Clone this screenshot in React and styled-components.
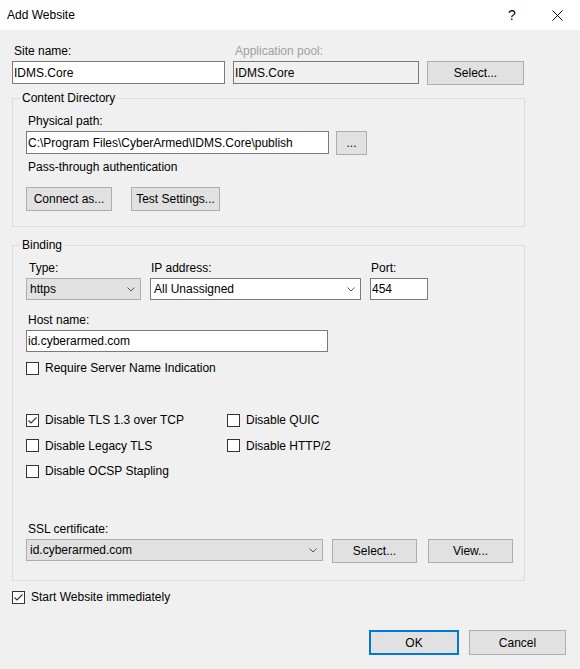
import React from 'react';
import styled, { createGlobalStyle } from 'styled-components';

const GlobalStyle = createGlobalStyle`
  html, body {
    margin: 0;
    padding: 0;
    background: #f0f0f0;
  }
  body {
    font-family: "Liberation Sans", Arial, sans-serif;
    font-size: 12px;
    color: #000;
  }
  *, *::before, *::after { box-sizing: border-box; }
`;

const Window = styled.div`
  width: 580px;
  height: 669px;
  background: #f0f0f0;
  display: flex;
  flex-direction: column;
  overflow: hidden;
`;

const TitleBar = styled.div`
  height: 30px;
  background: #fff;
  display: flex;
  align-items: center;
  flex-shrink: 0;
`;

const Title = styled.div`
  flex: 1;
  padding-left: 7px;
  line-height: 16px;
  margin-top: -1px;
`;

const CaptionButton = styled.div`
  width: ${p => p.$w}px;
  height: 30px;
  display: flex;
  align-items: center;
  justify-content: center;
  font-size: 14px;
  color: #000;
`;

const Body = styled.div`
  padding: 13px 0 0 12px;
  display: flex;
  flex-direction: column;
`;

const TopRow = styled.div`
  display: grid;
  grid-template-columns: 213px 186px 97px;
  column-gap: 8px;
  align-items: start;
`;

const Field = styled.div`
  display: flex;
  flex-direction: column;
  margin-top: ${p => p.$mt || 0}px;
  width: ${p => (p.$w ? `${p.$w}px` : 'auto')};
`;

const Label = styled.label`
  line-height: 16px;
  padding-left: ${p => (p.$pl ?? 2)}px;
  margin-bottom: 2px;
  white-space: nowrap;
  color: ${p => (p.$disabled ? '#a0a0a0' : '#000')};
`;

const TextBox = styled.input`
  display: block;
  width: ${p => (p.$w ? `${p.$w}px` : '100%')};
  height: ${p => p.$h || 23}px;
  margin: 0;
  padding: 0 1px;
  border: 1px solid #7a7a7a;
  border-radius: 0;
  background: ${p => (p.$muted ? '#f0f0f0' : '#fff')};
  font: inherit;
  color: #000;
  outline: none;
`;

const Button = styled.button`
  width: ${p => p.$w}px;
  height: ${p => p.$h || 24}px;
  margin: ${p => p.$mt || 0}px 0 0 ${p => p.$ml || 0}px;
  padding: 0;
  border: ${p => (p.$default ? '2px solid #0078d7' : '1px solid #adadad')};
  border-radius: 0;
  background: #e1e1e1;
  font: inherit;
  color: #000;
  flex-shrink: 0;
`;

const Group = styled.fieldset`
  width: 513px;
  margin: ${p => p.$mt}px 0 0 0;
  padding: 0;
  min-width: 0;
  border: 1px solid #dcdcdc;
`;

const Legend = styled.legend`
  margin-left: 7px;
  padding: 0 2px;
  line-height: 16px;
`;

const GroupBody = styled.div`
  padding: 7px 0 ${p => p.$pb}px 13px;
  display: flex;
  flex-direction: column;
  align-items: flex-start;
`;

const Row = styled.div`
  display: flex;
  align-items: flex-start;
  gap: ${p => p.$gap}px;
  margin-top: ${p => p.$mt || 0}px;
`;

const Text = styled.div`
  line-height: 16px;
  margin-top: ${p => p.$mt || 0}px;
  padding-left: 2px;
`;

const BindRow = styled.div`
  display: grid;
  grid-template-columns: 115px 211px 58px;
  column-gap: 9px;
`;

const Combo = styled.div`
  height: 22px;
  width: ${p => (p.$w ? `${p.$w}px` : '100%')};
  display: flex;
  align-items: center;
  justify-content: space-between;
  padding: 0 5px 0 3px;
  border: 1px solid ${p => (p.$editable ? '#7a7a7a' : '#adadad')};
  background: ${p => (p.$editable ? '#fff' : '#e1e1e1')};
  white-space: nowrap;
`;

const CheckRow = styled.div`
  display: flex;
  align-items: center;
  gap: 6px;
  height: 16px;
  margin-top: ${p => p.$mt || 0}px;
  white-space: nowrap;
`;

const Box = styled.span`
  width: 13px;
  height: 13px;
  border: 1px solid #333;
  background: #fff;
  display: flex;
  align-items: center;
  justify-content: center;
  flex-shrink: 0;
`;

const CheckGrid = styled.div`
  display: grid;
  grid-template-columns: 201px auto;
  row-gap: 9.5px;
  margin-top: 36px;
`;

const Footer = styled.div`
  display: flex;
  justify-content: flex-end;
  gap: 10px;
  padding-right: 14px;
  margin-top: 25px;
`;

const Chevron = () => (
  <svg width="8" height="5" viewBox="0 0 8 5">
    <polyline points="0.5,0.5 4,4 7.5,0.5" fill="none" stroke="#555" strokeWidth="1" />
  </svg>
);

const Checkbox = ({ checked, label, mt }) => (
  <CheckRow $mt={mt}>
    <Box>
      {checked && (
        <svg width="11" height="11" viewBox="0 0 11 11">
          <polyline points="1.5,5.5 4,8 9.5,2.5" fill="none" stroke="#333" strokeWidth="1.1" />
        </svg>
      )}
    </Box>
    <span>{label}</span>
  </CheckRow>
);

export default function App() {
  return (
    <>
      <GlobalStyle />
      <Window>
        <TitleBar>
          <Title>Add Website</Title>
          <CaptionButton $w={44}>?</CaptionButton>
          <CaptionButton $w={46}>
            <svg width="11" height="11" viewBox="0 0 11 11">
              <path d="M0.5 0.5 L10.5 10.5 M10.5 0.5 L0.5 10.5" stroke="#000" strokeWidth="1" />
            </svg>
          </CaptionButton>
        </TitleBar>

        <Body>
          <TopRow>
            <Field>
              <Label>Site name:</Label>
              <TextBox readOnly value="IDMS.Core" />
            </Field>
            <Field>
              <Label $disabled>Application pool:</Label>
              <TextBox readOnly $muted value="IDMS.Core" />
            </Field>
            <Button $w={97} $mt={18}>Select...</Button>
          </TopRow>

          <Group $mt={5}>
            <Legend>Content Directory</Legend>
            <GroupBody $pb={15}>
              <Label>Physical path:</Label>
              <Row $gap={7}>
                <TextBox $w={303} readOnly value="C:\Program Files\CyberArmed\IDMS.Core\publish" />
                <Button $w={31}>...</Button>
              </Row>
              <Text $mt={4}>Pass-through authentication</Text>
              <Row $gap={19} $mt={12}>
                <Button $w={86}>Connect as...</Button>
                <Button $w={89}>Test Settings...</Button>
              </Row>
            </GroupBody>
          </Group>

          <Group $mt={10}>
            <Legend>Binding</Legend>
            <GroupBody $pb={17}>
              <BindRow>
                <Field>
                  <Label $pl={3}>Type:</Label>
                  <Combo>
                    <span>https</span>
                    <Chevron />
                  </Combo>
                </Field>
                <Field>
                  <Label $pl={1}>IP address:</Label>
                  <Combo $editable>
                    <span>All Unassigned</span>
                    <Chevron />
                  </Combo>
                </Field>
                <Field>
                  <Label $pl={1}>Port:</Label>
                  <TextBox readOnly $h={22} value="454" />
                </Field>
              </BindRow>

              <Field $mt={12} $w={302}>
                <Label>Host name:</Label>
                <TextBox readOnly $h={22} value="id.cyberarmed.com" />
              </Field>

              <Checkbox mt={8} label="Require Server Name Indication" />

              <CheckGrid>
                <Checkbox checked label="Disable TLS 1.3 over TCP" />
                <Checkbox label="Disable QUIC" />
                <Checkbox label="Disable Legacy TLS" />
                <Checkbox label="Disable HTTP/2" />
                <Checkbox label="Disable OCSP Stapling" />
              </CheckGrid>

              <Row $gap={9} $mt={42}>
                <Field $w={297}>
                  <Label>SSL certificate:</Label>
                  <Combo>
                    <span>id.cyberarmed.com</span>
                    <Chevron />
                  </Combo>
                </Field>
                <Button $w={85} $mt={18}>Select...</Button>
                <Button $w={85} $mt={18} $ml={2}>View...</Button>
              </Row>
            </GroupBody>
          </Group>

          <Checkbox checked mt={8} label="Start Website immediately" />

          <Footer>
            <Button $w={90} $h={25} $default>OK</Button>
            <Button $w={97} $h={25}>Cancel</Button>
          </Footer>
        </Body>
      </Window>
    </>
  );
}
